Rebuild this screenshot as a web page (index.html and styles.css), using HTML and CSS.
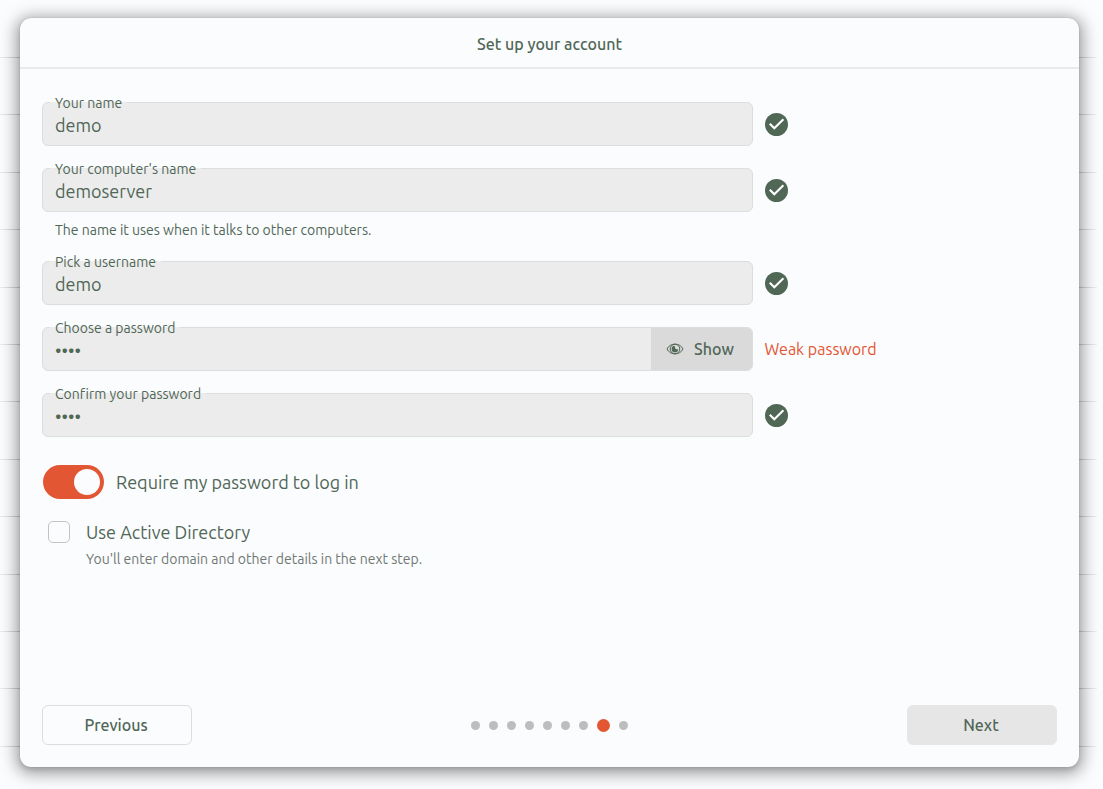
FILE: index.html
```html
<!DOCTYPE html>
<html lang="en">
<head>
<meta charset="utf-8">
<meta name="viewport" content="width=device-width, initial-scale=1">
<title>Set up your account</title>
<link rel="stylesheet" href="styles.css">
</head>
<body>
<svg class="sprite" width="0" height="0" aria-hidden="true">
  <symbol id="check" viewBox="0 0 24 24">
    <circle cx="12" cy="12" r="12" fill="#506756"/>
    <path d="M5 11.3 L9.7 16 L19.2 6.500" fill="none" stroke="#fff" stroke-width="2.200"/>
  </symbol>
</svg>
<div class="backdrop" aria-hidden="true">
  <i class="rule"></i><i class="rule"></i><i class="rule"></i><i class="rule"></i><i class="rule"></i><i class="rule"></i><i class="rule"></i><i class="rule"></i><i class="rule"></i><i class="rule"></i><i class="rule"></i><i class="rule"></i><i class="rule"></i>
</div>
<form class="window">
  <header class="titlebar"><h1 class="title">Set up your account</h1></header>
  <main class="content">
    <div class="fields">
      <div class="row">
        <div class="field">
          <label class="label" for="name">Your name</label>
          <input class="input" id="name" type="text" value="demo">
        </div>
        <svg class="check" role="img" aria-label="Valid"><use href="#check"/></svg>
      </div>
      <div class="row">
        <div class="field">
          <label class="label" for="host">Your computer's name</label>
          <input class="input" id="host" type="text" value="demoserver" aria-describedby="host-hint">
        </div>
        <svg class="check" role="img" aria-label="Valid"><use href="#check"/></svg>
        <p class="hint" id="host-hint">The name it uses when it talks to other computers.</p>
      </div>
      <div class="row">
        <div class="field">
          <label class="label" for="user">Pick a username</label>
          <input class="input" id="user" type="text" value="demo">
        </div>
        <svg class="check" role="img" aria-label="Valid"><use href="#check"/></svg>
      </div>
      <div class="row">
        <div class="field">
          <label class="label" for="pass">Choose a password</label>
          <input class="input" id="pass" type="password" value="demo">
          <button class="show" type="button">
            <svg class="eye" viewBox="0 0 18 12" fill="none" stroke="#506756" aria-hidden="true">
              <path d="M1 6 C4 -0.500 14 -0.500 17 6 C14 12.500 4 12.500 1 6 Z"/>
              <circle cx="9" cy="6" r="4.800"/>
              <path d="M8.500 2.800 A3.300 3.300 0 1 0 12.200 6.500 L9.500 6 Z" fill="#506756" stroke="none"/>
            </svg>
            Show
          </button>
        </div>
        <span class="weak">Weak password</span>
      </div>
      <div class="row">
        <div class="field">
          <label class="label" for="confirm">Confirm your password</label>
          <input class="input" id="confirm" type="password" value="demo">
        </div>
        <svg class="check" role="img" aria-label="Valid"><use href="#check"/></svg>
      </div>
    </div>
    <div class="option switch-option">
      <input class="switch" id="require" type="checkbox" role="switch" checked>
      <label class="option-label" for="require">Require my password to log in</label>
    </div>
    <div class="option check-option">
      <input class="box" id="directory" type="checkbox" aria-describedby="directory-hint">
      <label class="option-label" for="directory">Use Active Directory</label>
      <p class="option-hint" id="directory-hint">You'll enter domain and other details in the next step.</p>
    </div>
  </main>
  <footer class="footer">
    <button class="button outlined" type="button">Previous</button>
    <div class="dots" role="img" aria-label="Step 8 of 9">
      <i class="dot"></i><i class="dot"></i><i class="dot"></i><i class="dot"></i><i class="dot"></i><i class="dot"></i><i class="dot"></i><i class="dot active"></i><i class="dot"></i>
    </div>
    <button class="button filled" type="submit">Next</button>
  </footer>
</form>
</body>
</html>
```
FILE: styles.css
```css
* { box-sizing: border-box; }

body {
  --ink: #506756;
  --accent: #e35633;
  --surface: #fbfcfe;
  --fill: #ececec;
  --line: #dcdddd;
  margin: 0;
  padding: 18px 24px 22px 20px;
  min-height: 100vh;
  display: flex;
  background: var(--surface);
  color: var(--ink);
  font-family: Ubuntu, "Noto Sans", sans-serif;
  font-size: 18px;
  line-height: 24px;
  font-variant-ligatures: none;
}

.sprite { position: absolute; }

.backdrop {
  position: absolute;
  inset: 0 6px 0 0;
  padding: 57px 0 42px;
  display: flex;
  flex-direction: column;
  justify-content: space-between;
}
.rule {
  height: 1px;
  background: linear-gradient(90deg, #ebebeb, #ccc 20px, #ccc calc(100% - 18px), #f0f0f0);
}

.window {
  position: relative;
  flex: 1;
  display: flex;
  flex-direction: column;
  border-radius: 11px;
  background: var(--surface);
  box-shadow: 0 0 1px #888, 0 3px 4px rgba(0, 0, 0, .1), 0 3px 16px 4px rgba(0, 0, 0, .36);
}

.titlebar {
  padding: 14px 22px 11px;
  border-bottom: 2px solid #e9eaea;
  text-align: center;
}
.title { margin: 0; font-size: 16px; font-weight: 500; line-height: 24px; }

.content { flex: 1; padding: 33px 22px 20px; }

.fields { display: grid; gap: 22px; }
.row {
  display: grid;
  grid-template-columns: 70% 1fr;
  column-gap: 12px;
  align-items: center;
}
.field {
  position: relative;
  display: flex;
  height: 44px;
  border: 1px solid var(--line);
  border-radius: 6px;
  background: var(--fill);
}
.label {
  position: absolute;
  left: 7px;
  top: -9px;
  padding: 0 5px;
  background: linear-gradient(transparent 8px, var(--fill) 8px);
  font-size: 14px;
  line-height: 18px;
}
.input {
  flex: 1;
  min-width: 0;
  padding: 2px 12px 0;
  border: 0;
  outline: 0;
  background: none;
  color: inherit;
  font: inherit;
}
.check { width: 23px; height: 23px; }
.hint { margin: 10px 13px 0; font-size: 14px; line-height: 17px; }
.weak { color: var(--accent); font-size: 16px; }
.show {
  display: flex;
  align-items: center;
  justify-content: center;
  gap: 10px;
  width: 101px;
  padding: 0 2px 0 0;
  border: 0;
  border-radius: 0 5px 5px 0;
  background: #dadada;
  color: inherit;
  font: 500 16px/24px Ubuntu, "Noto Sans", sans-serif;
}
.eye { width: 18px; height: 12px; }

.switch-option {
  display: flex;
  align-items: center;
  gap: 12px;
  margin: 28px 1px 0;
}
.switch {
  appearance: none;
  display: flex;
  justify-content: flex-end;
  width: 61px;
  height: 34px;
  margin: 0;
  padding: 4px;
  border-radius: 17px;
  background: var(--accent);
}
.switch::before {
  content: "";
  width: 26px;
  height: 26px;
  border-radius: 50%;
  background: var(--surface);
}
.switch:not(:checked) { justify-content: flex-start; background: #bbb; }
.check-option {
  display: grid;
  grid-template-columns: 22px 1fr;
  column-gap: 16px;
  align-items: center;
  margin: 21px 6px 0;
}
.box {
  appearance: none;
  width: 22px;
  height: 22px;
  margin: 0;
  border: 1px solid #c2c3c3;
  border-radius: 5px;
  background: var(--surface);
}
.box:checked { background: var(--accent); }
.option-hint {
  grid-column: 2;
  margin: 6px 0 0;
  color: #707872;
  font-size: 14px;
  line-height: 18px;
}

.footer {
  display: grid;
  grid-template-columns: 1fr auto 1fr;
  align-items: center;
  padding: 0 22px 22px;
}
.button {
  width: 150px;
  height: 40px;
  padding: 0 2px 0 0;
  border: 1px solid var(--line);
  border-radius: 6px;
  color: inherit;
  font: 500 16px/24px Ubuntu, "Noto Sans", sans-serif;
}
.outlined { background: none; }
.filled { justify-self: end; border-color: #e6e7e7; background: #e6e6e6; }
.dots { display: flex; align-items: center; gap: 9px; }
.dot { width: 9px; height: 9px; border-radius: 50%; background: #bdbdbd; }
.active { width: 13px; height: 13px; background: var(--accent); }
```
